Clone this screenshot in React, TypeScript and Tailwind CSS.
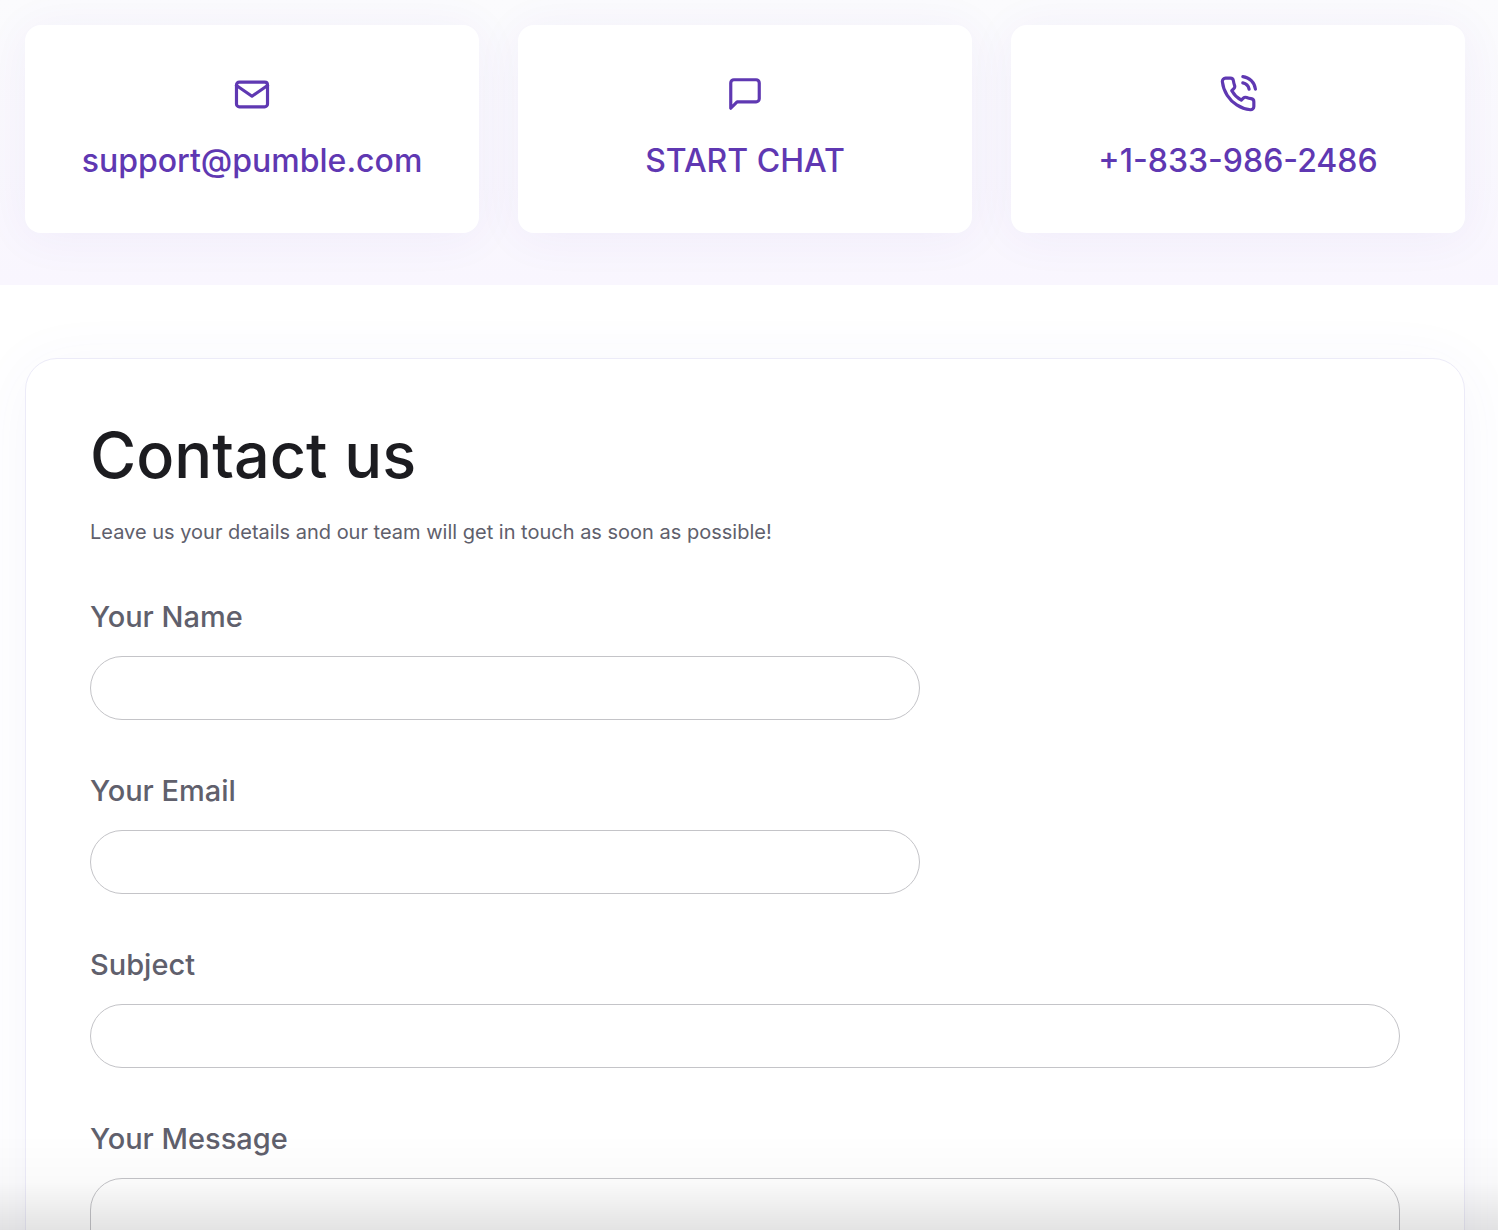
import React from 'react';

interface ContactCardProps {
  href: string;
  label: string;
  children: React.ReactNode;
}

interface FieldProps {
  id: string;
  label: string;
  type?: string;
  wide?: boolean;
}

export default function App() {
  return (
    <div className="min-h-screen bg-white font-['Inter',sans-serif] overflow-x-hidden">
      {/* Contact options */}
      <section className="bg-linear-to-b from-[#fbfbfd] to-[#f9f6fe] pt-[25px] pb-[52px] pl-[25px] pr-[33px] overflow-hidden">
        <div className="grid grid-cols-3 gap-[39px]">
          <ContactCard href="mailto:support@pumble.com" label="support@pumble.com">
            <path d="M4 4.5h16c1.1 0 1.8.8 1.8 1.8v12c0 1-.8 1.8-1.8 1.8H4c-1 0-1.8-.8-1.8-1.8v-12c0-1 .8-1.8 1.8-1.8z" />
            <polyline points="21.8,6.6 12,13.4 2.2,6.6" />
          </ContactCard>
          <ContactCard href="#chat" label="START CHAT">
            <path d="M21 15a2 2 0 0 1-2 2H7l-4 4V5a2 2 0 0 1 2-2h14a2 2 0 0 1 2 2z" />
          </ContactCard>
          <ContactCard href="tel:+18339862486" label="+1-833-986-2486">
            <path d="M15.05 5A5 5 0 0 1 19 8.95M15.05 1A9 9 0 0 1 23 8.94m-1 7.98v3a2 2 0 0 1-2.18 2 19.79 19.79 0 0 1-8.63-3.07 19.5 19.5 0 0 1-6-6 19.79 19.79 0 0 1-3.07-8.67A2 2 0 0 1 4.11 2h3a2 2 0 0 1 2 1.72 12.84 12.84 0 0 0 .7 2.81 2 2 0 0 1-.45 2.11L8.09 9.91a16 16 0 0 0 6 6l1.27-1.27a2 2 0 0 1 2.11-.45 12.84 12.84 0 0 0 2.81.7A2 2 0 0 1 22 16.92z" />
          </ContactCard>
        </div>
      </section>

      {/* Contact form */}
      <main className="pt-[73px] pl-[25px] pr-[33px]">
        <form
          onSubmit={(e) => e.preventDefault()}
          className="bg-white border border-[#ecebf8] rounded-[32px] px-16 pt-14 pb-16 shadow-[0_8px_64px_rgba(80,70,190,0.05)]"
        >
          <h1 className="text-[63px] leading-[80px] font-medium text-[#1c1c20]">Contact us</h1>
          <p className="mt-[22px] text-[20px] leading-[30px] text-[#60606c]">
            Leave us your details and our team will get in touch as soon as possible!
          </p>

          <div className="mt-[50px] flex flex-col gap-[51px]">
            <Field id="name" label="Your Name" />
            <Field id="email" label="Your Email" type="email" />
            <Field id="subject" label="Subject" wide />
            <div className="flex flex-col gap-[19px]">
              <label htmlFor="message" className="text-[29px] leading-10 font-medium text-[#60606c]">Your Message</label>
              <textarea
                id="message"
                className="w-full h-[260px] px-8 py-5 border border-[#c4c4c8] rounded-[32px] text-[20px] resize-none outline-none focus:border-[#5f38b2]"
              />
            </div>
          </div>
        </form>
      </main>

      {/* Fade at the bottom edge of the window */}
      <div className="fixed inset-x-0 bottom-0 h-24 pointer-events-none bg-linear-to-b from-black/0 via-black/2 to-black/11" />
    </div>
  );
}

function ContactCard({ href, label, children }: ContactCardProps) {
  return (
    <a
      href={href}
      className="flex flex-col items-center gap-6 pt-[50px] pb-12 bg-white rounded-2xl text-[#5f38b2] shadow-[0_4px_48px_rgba(92,54,190,0.06)]"
    >
      <svg
        className="size-[38px]"
        viewBox="0 0 24 24"
        fill="none"
        stroke="currentColor"
        strokeWidth={2}
        strokeLinecap="round"
        strokeLinejoin="round"
        aria-hidden="true"
      >
        {children}
      </svg>
      <span className="text-[32px] leading-[48px] font-medium">{label}</span>
    </a>
  );
}

function Field({ id, label, type = 'text', wide = false }: FieldProps) {
  return (
    <div className="flex flex-col gap-[19px]">
      <label htmlFor={id} className="text-[29px] leading-10 font-medium text-[#60606c]">{label}</label>
      <input
        id={id}
        type={type}
        className={`${wide ? 'w-full' : 'w-full max-w-[830px]'} h-16 px-8 border border-[#c4c4c8] rounded-full text-[20px] outline-none focus:border-[#5f38b2]`}
      />
    </div>
  );
}
